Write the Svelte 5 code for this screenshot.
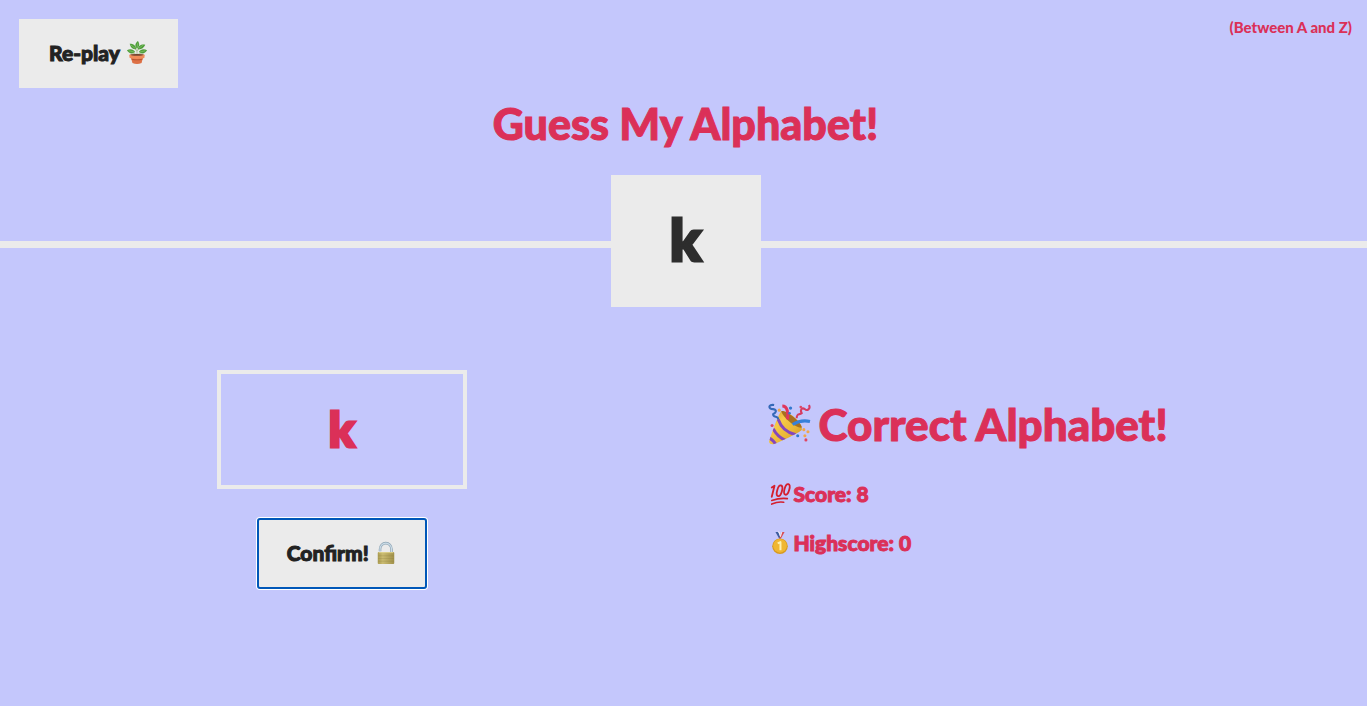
<script>
  let secret = $state('k');
  let guess = $state('k');
  let message = $state('Correct Alphabet!');
  let score = $state(8);
  let highscore = $state(0);
  let field;

  function confirmGuess() {
    if (!guess) return;
    if (guess.toLowerCase() === secret) {
      message = 'Correct Alphabet!';
      highscore = Math.max(highscore, score);
    } else {
      message = 'Wrong Alphabet!';
      score = Math.max(0, score - 1);
    }
  }

  function replay() {
    secret = String.fromCharCode(97 + Math.floor(Math.random() * 26));
    guess = '';
    score = 10;
    message = 'Start guessing...';
    field.focus();
  }
</script>

<div class="page">
  <header>
    <div class="bar">
      <button class="btn replay" onclick={replay}>
        Re-play
        <svg class="icon" viewBox="0 0 24 24" aria-hidden="true">
          <path d="M12 15V5M12 14L5 11M12 14l7-3M12 10L8 6M12 10l4-4" fill="none" stroke="#a9bd91" stroke-width="1" />
          <g fill="#4f9e3b">
            <path d="M12 7C9 5 10 1 13 -1c2 3 2 6-1 8Z" />
            <path d="M11 8C7 8 5 6 4 2c4 0 7 2 7 6Z" />
            <path d="M13 8c4 0 6-1 8-5-4-1-8 1-8 5Z" />
            <path d="M10 11C6 14 3 12 1 9c4-2 7-1 9 2Z" />
            <path d="M14 11c4 3 7 1 9-2-4-2-7-1-9 2Z" />
          </g>
          <path d="M12 6l1-5M10 7L5 3M14 7l5-4M9 11L3 9.500M15 11l6-1.500" stroke="#8bc96c" stroke-width=".7" />
          <path d="M5 15h14l-2 8q-5 2-10 0Z" fill="#dd7045" />
          <path d="M5.700 18q6.300 2 12.600 0l-.3 1q-6 2-12 0Z" fill="#b5522f" />
          <path d="M3.500 14q8.500-2 17 0l-.5 3.500q-8 2-16 0Z" fill="#f08b59" />
          <ellipse cx="12" cy="14" rx="7.500" ry=".9" fill="#70432f" />
        </svg>
      </button>
      <p class="between">(Between A and Z)</p>
    </div>
    <h1>Guess My Alphabet!</h1>
    <div class="secret">{secret}</div>
  </header>

  <main>
    <section class="left">
      <input bind:this={field} bind:value={guess} type="text" maxlength="1" aria-label="Your guess" />
      <button class="btn confirm" onclick={confirmGuess}>
        Confirm!
        <svg class="icon" viewBox="0 0 24 24" aria-hidden="true">
          <defs>
            <linearGradient id="brass" x2="1" y2="0">
              <stop stop-color="#a99a50" /><stop offset=".3" stop-color="#cabb70" /><stop offset="1" stop-color="#a0904a" />
            </linearGradient>
          </defs>
          <path d="M5.500 10V8a6 6.500 0 0 1 12.500 0v5" fill="none" stroke="#8fa5b5" stroke-width="2.800" />
          <path d="M5.500 10V8a6 6.500 0 0 1 12.500 0v5" fill="none" stroke="#cbdce7" stroke-width="1.300" />
          <rect x="3" y="11" width="18" height="13" rx="1" fill="url(#brass)" />
          <path d="M3.500 15h17M3.500 18h17M3.500 21h17" stroke="#87783b" stroke-width=".5" opacity=".5" />
          <path d="M4 11.600h16" stroke="#e0d48f" stroke-width="1" />
        </svg>
      </button>
    </section>

    <section class="right">
      <p class="message">
        <svg class="popper" viewBox="0 0 40 40" aria-hidden="true">
          <defs>
            <linearGradient id="cone" x1="0" y1="0" x2="1" y2="1">
              <stop stop-color="#c98f20" /><stop offset=".35" stop-color="#f6ca48" /><stop offset=".6" stop-color="#eab637" /><stop offset="1" stop-color="#b67c18" />
            </linearGradient>
            <clipPath id="cone-edge">
              <path d="M12 7C10 8 1 32 0 37q1 3 5 2C12 36 30 28 32 25 33 18 18 6 12 7Z" />
            </clipPath>
          </defs>
          <g clip-path="url(#cone-edge)">
            <path d="M0 0h40v40H0Z" fill="url(#cone)" />
            <path d="M9 15Q13 27 26 30" fill="none" stroke="#8447bd" stroke-width="3" />
            <path d="M4 24q4 8 13 12M0 33q4 2 7 7" fill="none" stroke="#8447bd" stroke-width="3" />
          </g>
          <path d="M12 7C17 6 31 17 32 23 27 24 14 14 12 7Z" fill="#a87020" />
          <path d="M18 15C19 9 18 2 13 2" fill="none" stroke="#e0365c" stroke-width="3" />
          <path d="M23 20Q31 15 40 17" fill="none" stroke="#3680da" stroke-width="3" />
          <path d="M5 1C-1 0-1 5 4 5c5 1 2 4 0 5 0 4 5 1 5 5" fill="none" stroke="#3469b8" stroke-width="2" />
          <path d="M39 1c2 4-2 6-4 4-3-2-5 1-3 4-3 2-5 0-5 5" fill="none" stroke="#d63b61" stroke-width="2" />
          <g fill="#3178cf"><circle cx="21" cy="4" r="1.600" /><circle cx="20" cy="9" r="1.300" /><circle cx="28" cy="31" r="1.500" /></g>
          <g fill="#df4662"><circle cx="31" cy="3" r="1.300" /><circle cx="3" cy="21" r="1.500" /><circle cx="36" cy="35" r="1.500" /></g>
          <g fill="#f1a64a"><circle cx="10" cy="6" r="1.500" /><circle cx="34" cy="25" r="1.500" /><circle cx="38" cy="27" r="1.500" /><circle cx="35" cy="31" r="1.500" /></g>
        </svg>
        {message}
      </p>
      <p class="stat">
        <svg class="icon" viewBox="0 0 24 24" aria-hidden="true">
          <g fill="none" stroke="#d51f2e" stroke-width="2" stroke-linecap="round">
            <path d="M3 5l3-2-3 12" />
            <ellipse cx="11.500" cy="8.500" rx="2.600" ry="6" transform="rotate(16 11.500 8.500)" />
            <ellipse cx="19.500" cy="7" rx="2.600" ry="6" transform="rotate(16 19.500 7)" />
            <path d="M3 19q9-3 17-2M3 23q7-3 13-2" stroke-width="1.800" />
          </g>
        </svg>
        <span>Score: {score}</span>
      </p>
      <p class="stat">
        <svg class="icon" viewBox="0 0 24 24" aria-hidden="true">
          <path d="M7 0h3l3 7h-2Z" fill="#3d5d9e" />
          <path d="M17 0h-3l-3 7h2Z" fill="#d64c55" />
          <path d="M10 0h1l1.500 5M14 0l-1.500 5" stroke="#f6f3f4" fill="none" />
          <circle cx="12" cy="15.500" r="8.500" fill="#d79a20" />
          <circle cx="12" cy="15" r="7.500" fill="#f0b733" />
          <path d="M9.500 12.500L12.500 11v9" fill="none" stroke="#fff0ae" stroke-width="2.200" />
        </svg>
        <span>Highscore: {highscore}</span>
      </p>
    </section>
  </main>
</div>

<style>
  :global(body) {
    margin: 0;
    background: #c4c7fc;
  }

  .page,
  .page * {
    box-sizing: border-box;
  }

  .page {
    min-height: 100vh;
    font-family: Lato, "Open Sans", sans-serif;
    font-weight: 900;
    color: #db3058;
    stroke-linejoin: round;
    -webkit-text-stroke: 1px currentColor;
  }

  p,
  h1 {
    margin: 0;
  }

  header {
    position: relative;
    height: 248px;
    border-bottom: 7px solid #ebebeb;
  }

  .bar {
    display: flex;
    justify-content: space-between;
    align-items: flex-start;
    padding: 19px 15px 0 19px;
  }

  .between {
    font-size: 15px;
    line-height: 16px;
    -webkit-text-stroke-width: 0;
  }

  h1 {
    margin-top: 8px;
    padding-left: 4px;
    font-size: 43px;
    line-height: 56px;
    font-weight: 900;
    text-align: center;
  }

  .secret {
    position: absolute;
    left: calc(50% + 2px);
    bottom: -66px;
    width: 150px;
    height: 132px;
    transform: translateX(-50%);
    background: #ebebeb;
    color: #2d2d2d;
    font-size: 58px;
    line-height: 128px;
    text-align: center;
    -webkit-text-stroke-width: 3px;
  }

  .btn {
    display: flex;
    align-items: center;
    justify-content: center;
    gap: 6px;
    height: 69px;
    padding: 0 0 2px;
    border: 0;
    background: #ebebeb;
    color: #222;
    font-family: inherit;
    font-size: 21px;
    font-weight: 900;
    -webkit-text-stroke: 1px currentColor;
    cursor: pointer;
  }

  .replay {
    width: 159px;
  }

  .confirm {
    width: 168px;
    border-radius: 2px;
    outline: 2px solid #0057b8;
    outline-offset: -1px;
    box-shadow: 0 0 0 2px #fff;
  }

  .icon {
    flex: none;
    width: 22px;
    height: 22px;
    overflow: visible;
  }

  main {
    display: grid;
    grid-template-columns: 1fr 1fr;
  }

  .left {
    display: flex;
    flex-direction: column;
    align-items: center;
    gap: 30px;
    padding-top: 122px;
  }

  input {
    width: 250px;
    height: 119px;
    padding: 0 0 2px;
    border: 4px solid #ebebeb;
    border-radius: 0;
    outline: none;
    background: transparent;
    color: inherit;
    font-family: inherit;
    font-size: 48px;
    font-weight: 900;
    text-align: center;
    stroke-linejoin: round;
    -webkit-text-stroke: 3px currentColor;
  }

  .right {
    padding: 148px 0 0 85px;
  }

  .message {
    display: flex;
    align-items: center;
    gap: 9px;
    margin-bottom: 29px;
    font-size: 44px;
    line-height: 56px;
    white-space: nowrap;
  }

  .popper {
    flex: none;
    width: 41px;
    height: 41px;
    overflow: visible;
  }

  .stat {
    display: flex;
    align-items: center;
    gap: 3px;
    height: 25px;
    margin-bottom: 24px;
    font-size: 21px;
  }

  @media (max-width: 900px) {
    main {
      grid-template-columns: 1fr;
    }

    .right {
      padding: 48px 24px;
    }

    .message {
      white-space: normal;
    }
  }
</style>
